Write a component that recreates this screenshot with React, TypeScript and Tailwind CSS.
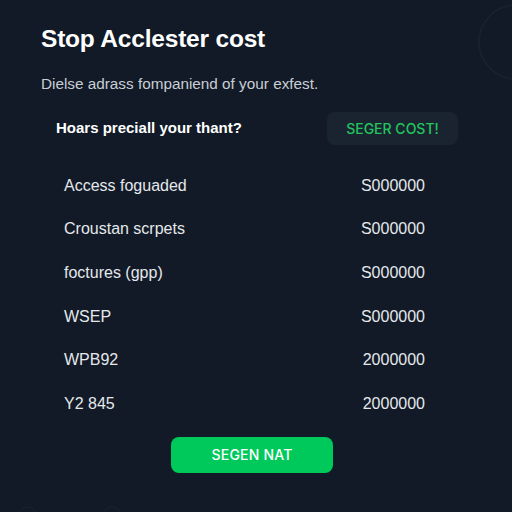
const rows: [string, string][] = [
  ['Access foguaded', 'S000000'],
  ['Croustan scrpets', 'S000000'],
  ['foctures (gpp)', 'S000000'],
  ['WSEP', 'S000000'],
  ['WPB92', '2000000'],
  ['Y2 845', '2000000'],
];

export default function App() {
  return (
    <div
      className="relative h-[512px] w-[512px] overflow-hidden bg-[#111a26] text-white"
      style={{ fontFamily: '"Liberation Sans", Arial, sans-serif' }}
    >
      {/* faint decorative rings */}
      <div className="absolute right-[-42px] top-[4px] h-[76px] w-[76px] rounded-full border-2 border-[#172130]" />
      <div className="absolute bottom-[-14px] left-[18px] h-[20px] w-[20px] rounded-full border-2 border-[#151f2d]" />
      <div className="absolute bottom-[-14px] left-[102px] h-[20px] w-[20px] rounded-full border-2 border-[#151f2d]" />

      <div className="relative flex flex-col px-[41px] pt-[24px]">
        <h1 className="text-[24.5px] font-bold leading-[30px] tracking-[-0.2px]">Stop Acclester cost</h1>
        <p className="mt-[20px] text-[15.3px] leading-[20px] text-[#c9ced6]">
          Dielse adrass fompaniend of your exfest.
        </p>

        <div className="mt-[18px] flex items-center justify-between pl-[15px] pr-[13px]">
          <span className="text-[15px] font-bold">Hoars preciall your thant?</span>
          <button className="h-[33px] w-[131px] rounded-lg bg-[#1a2430] font-['Inter',sans-serif] text-[14px] font-medium text-[#22c55e]">
            SEGER COST!
          </button>
        </div>

        <div className="mt-[19px] ml-[23px] flex w-[361px] flex-col">
          {rows.map(([label, value]) => (
            <div key={label} className="flex h-[43.6px] items-center justify-between text-[16px] text-[#e5e8ec]">
              <span>{label}</span>
              <span>{value}</span>
            </div>
          ))}
        </div>

        <div className="mt-[11px] flex justify-center pr-[8px]">
          <button className="h-[36px] w-[162px] rounded-lg bg-[#00c95b] font-['Inter',sans-serif] text-[14px] font-medium tracking-[0.2px] text-white">
            SEGEN NAT
          </button>
        </div>
      </div>
    </div>
  );
}
